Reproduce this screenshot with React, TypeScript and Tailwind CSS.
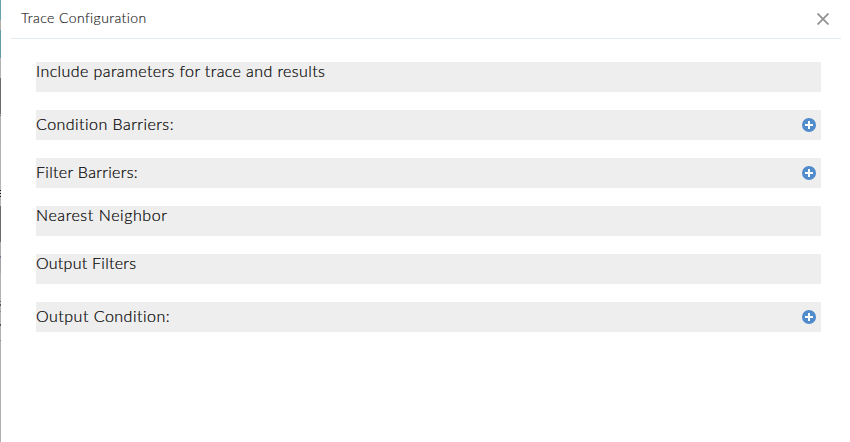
import React from "react";

type Row = { label: string; add: boolean; text: string };

const rows: Row[] = [
  { label: "Include parameters for trace and results", add: false, text: "tracking-[0.41px]" },
  { label: "Condition Barriers:", add: true, text: "tracking-[0.47px]" },
  { label: "Filter Barriers:", add: true, text: "tracking-[0.33px]" },
  { label: "Nearest Neighbor", add: false, text: "tracking-[0.58px]" },
  { label: "Output Filters", add: false, text: "tracking-[0.27px]" },
  { label: "Output Condition:", add: true, text: "tracking-[0.5px]" },
];

// Slice of the page behind the dialog: [height, colour]
const edge: [number, string][] = [
  [20, "#68a0ab"], [10, "#b3adad"], [28, "#659ba5"], [20, "#b3b3b3"],
  [36, "#6b6b6b"], [1, "#b0b0b0"], [1, "#777777"], [29, "#adb0b1"],
  [45, "#b3b3b3"], [1, "#111111"], [2, "#c2c2c2"], [1, "#111111"],
  [2, "#c2c2c2"], [1, "#111111"], [9, "#b3b3b3"], [36, "#6b6b6b"],
  [14, "#adadad"], [2, "#74748f"], [15, "#a4a4a8"], [28, "#b3b3b3"],
  [1, "#666666"], [2, "#b3b3b3"], [2, "#555555"], [5, "#b3b3b3"],
  [1, "#888888"], [12, "#b3b3b3"], [2, "#555555"], [14, "#b3b3b3"],
  [1, "#888888"], [101, "#b0b0b0"],
];

function AddButton() {
  return (
    <button aria-label="Add" className="mr-[5px] size-[14px]">
      <svg viewBox="0 0 14 14" className="block size-[14px]">
        <circle cx="7" cy="7" r="7" fill="#508bcb" />
        <path d="M6 3h2v3h3v2H8v3H6V8H3V6h3z" fill="#fff" />
      </svg>
    </button>
  );
}

export default function App() {
  return (
    <div className="flex h-[442px] w-[850px] overflow-hidden bg-white font-['Lato','Open_Sans',sans-serif] font-light">
      <div className="flex w-px shrink-0 flex-col">
        {edge.map(([height, backgroundColor], i) => (
          <div key={i} className="shrink-0" style={{ height, backgroundColor }} />
        ))}
      </div>
      <main className="flex-1">
        <header className="ml-[10px] mr-[9px] flex h-[39px] items-start justify-between border-b border-[#e0eaf0] pl-[10px] pr-3">
          <h1 className="mt-[8px] text-[14px] leading-5 font-light tracking-[0.4px] text-[#202020] [-webkit-text-stroke:0.15px_#202020]">Trace Configuration</h1>
          <button aria-label="Close" className="mt-[13px] h-3 w-3">
            <svg viewBox="0 0 12 12" className="block h-3 w-3" fill="none" stroke="#929292" strokeWidth="1.8">
              <path d="M.5.5l11 11M11.5.5l-11 11" />
            </svg>
          </button>
        </header>
        <div className="ml-[35px] mr-[29px] mt-[23px] flex flex-col gap-[18px]">
          {rows.map((row) => (
            <section
              key={row.label}
              className={`flex h-[30px] justify-between bg-[#eeeeee] ${row.add ? "items-center" : "items-start"}`}
            >
              <span className={`-mt-px whitespace-nowrap text-[16px] leading-5 text-black [-webkit-text-stroke:0.2px_black] ${row.add ? "mb-px" : ""} ${row.text}`}>{row.label}</span>
              {row.add && <AddButton />}
            </section>
          ))}
        </div>
      </main>
    </div>
  );
}
